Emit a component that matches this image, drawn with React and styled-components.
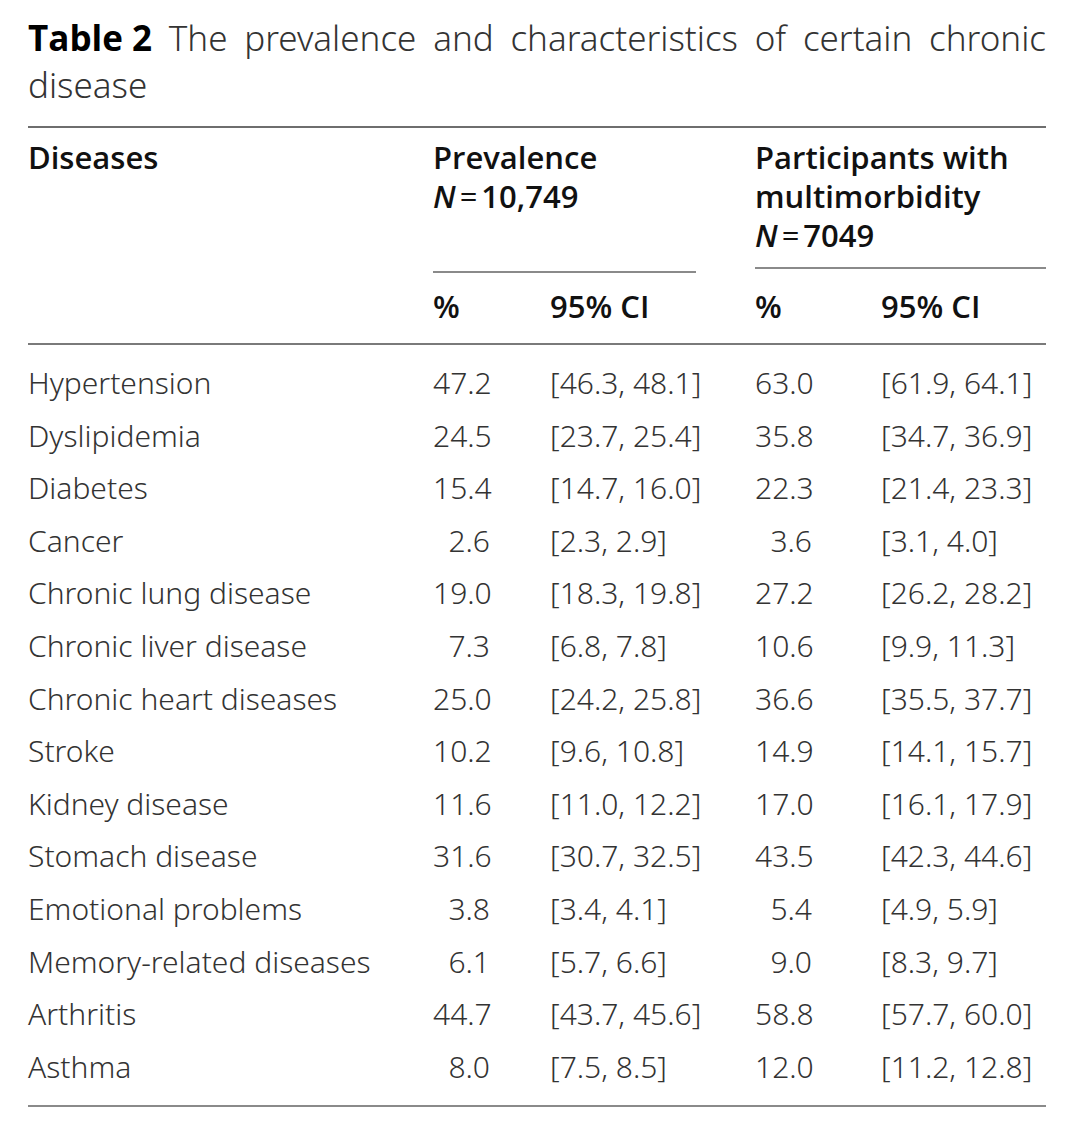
import React from 'react';
import styled, { createGlobalStyle } from 'styled-components';

const GlobalStyle = createGlobalStyle`
	html, body {
		margin: 0;
		padding: 0;
		background: #ffffff;
	}
	body {
		font-family: 'Noto Sans', 'Open Sans', sans-serif;
		color: #333;
	}
`;

const rows = [
	['Hypertension', '47.2', '[46.3, 48.1]', '63.0', '[61.9, 64.1]'],
	['Dyslipidemia', '24.5', '[23.7, 25.4]', '35.8', '[34.7, 36.9]'],
	['Diabetes', '15.4', '[14.7, 16.0]', '22.3', '[21.4, 23.3]'],
	['Cancer', '2.6', '[2.3, 2.9]', '3.6', '[3.1, 4.0]'],
	['Chronic lung disease', '19.0', '[18.3, 19.8]', '27.2', '[26.2, 28.2]'],
	['Chronic liver disease', '7.3', '[6.8, 7.8]', '10.6', '[9.9, 11.3]'],
	['Chronic heart diseases', '25.0', '[24.2, 25.8]', '36.6', '[35.5, 37.7]'],
	['Stroke', '10.2', '[9.6, 10.8]', '14.9', '[14.1, 15.7]'],
	['Kidney disease', '11.6', '[11.0, 12.2]', '17.0', '[16.1, 17.9]'],
	['Stomach disease', '31.6', '[30.7, 32.5]', '43.5', '[42.3, 44.6]'],
	['Emotional problems', '3.8', '[3.4, 4.1]', '5.4', '[4.9, 5.9]'],
	['Memory-related diseases', '6.1', '[5.7, 6.6]', '9.0', '[8.3, 9.7]'],
	['Arthritis', '44.7', '[43.7, 45.6]', '58.8', '[57.7, 60.0]'],
	['Asthma', '8.0', '[7.5, 8.5]', '12.0', '[11.2, 12.8]'],
];

const App = () => {
	return (
		<Page>
			<GlobalStyle />
			<Caption>
				<Label>Table 2</Label> The prevalence and characteristics of certain chronic disease
			</Caption>
			<Table>
				<HeadGrid>
					<HeadCell $span="1 / 2" $row="1 / 2">
						Diseases
					</HeadCell>
					<GroupCell $span="2 / 4">
						Prevalence
						<br />
						<i>N</i>
						<Eq>=</Eq>10,749
					</GroupCell>
					<GroupCell $span="5 / 7" $lift>
						Participants with
						<br />
						multimorbidity
						<br />
						<i>N</i>
						<Eq>=</Eq>7049
					</GroupCell>
					<SubCell $col="2">%</SubCell>
					<SubCell $col="3">95% CI</SubCell>
					<SubCell $col="5">%</SubCell>
					<SubCell $col="6">95% CI</SubCell>
				</HeadGrid>
				<Body>
					{rows.map((r) => (
						<Row key={r[0]}>
							<Name>{r[0]}</Name>
							<Num>{r[1]}</Num>
							<Ci>{r[2]}</Ci>
							<span />
							<Num>{r[3]}</Num>
							<Ci>{r[4]}</Ci>
						</Row>
					))}
				</Body>
			</Table>
		</Page>
	);
};

export default App;

const columns = '405px 117px 146px 59px 126px 1fr';

const Page = styled.div`
	width: 1018px;
	padding: 14px 28px 20px 28px;
`;

const Caption = styled.p`
	margin: 0;
	font-size: 35px;
	line-height: 47px;
	font-weight: 300;
	text-align: justify;
	color: #333;
`;

const Label = styled.span`
	display: inline-block;
	font-family: 'Open Sans', 'Noto Sans', sans-serif;
	font-weight: 700;
	color: #000;
`;

const Table = styled.div`
	margin-top: 18px;
	border-top: 2px solid #6e6e6e;
	border-bottom: 2px solid #8a8a8a;
`;

const HeadGrid = styled.div`
	display: grid;
	grid-template-columns: ${columns};
	padding-top: 10px;
	border-bottom: 2px solid #7a7a7a;
	font-family: 'Open Sans', 'Noto Sans', sans-serif;
	font-size: 31px;
	line-height: 39px;
	font-weight: 600;
	color: #111;
`;

const HeadCell = styled.div`
	grid-column: ${({ $span }) => $span};
	grid-row: ${({ $row }) => $row};
`;

const GroupCell = styled.div`
	grid-column: ${({ $span }) => $span};
	grid-row: 1 / 2;
	padding-bottom: 12px;
	margin-bottom: ${({ $lift }) => ($lift ? '4px' : '0')};
	border-bottom: 2px solid #8a8a8a;
	white-space: nowrap;

	i {
		font-style: italic;
	}
`;

const Eq = styled.span`
	margin: 0 4px;
	font-weight: 400;
`;

const SubCell = styled.div`
	grid-column: ${({ $col }) => $col};
	grid-row: 2 / 3;
	padding: 14px 0 17px 0;
`;

const Body = styled.div`
	padding: 12px 0 12px 0;
`;

const Row = styled.div`
	display: grid;
	grid-template-columns: ${columns};
	font-size: 30px;
	line-height: 52.6px;
	font-weight: 300;
	color: #333;
`;

const Name = styled.span`
	white-space: nowrap;
`;

const Num = styled.span`
	width: 57px;
	text-align: right;
`;

const Ci = styled.span`
	white-space: nowrap;
`;
